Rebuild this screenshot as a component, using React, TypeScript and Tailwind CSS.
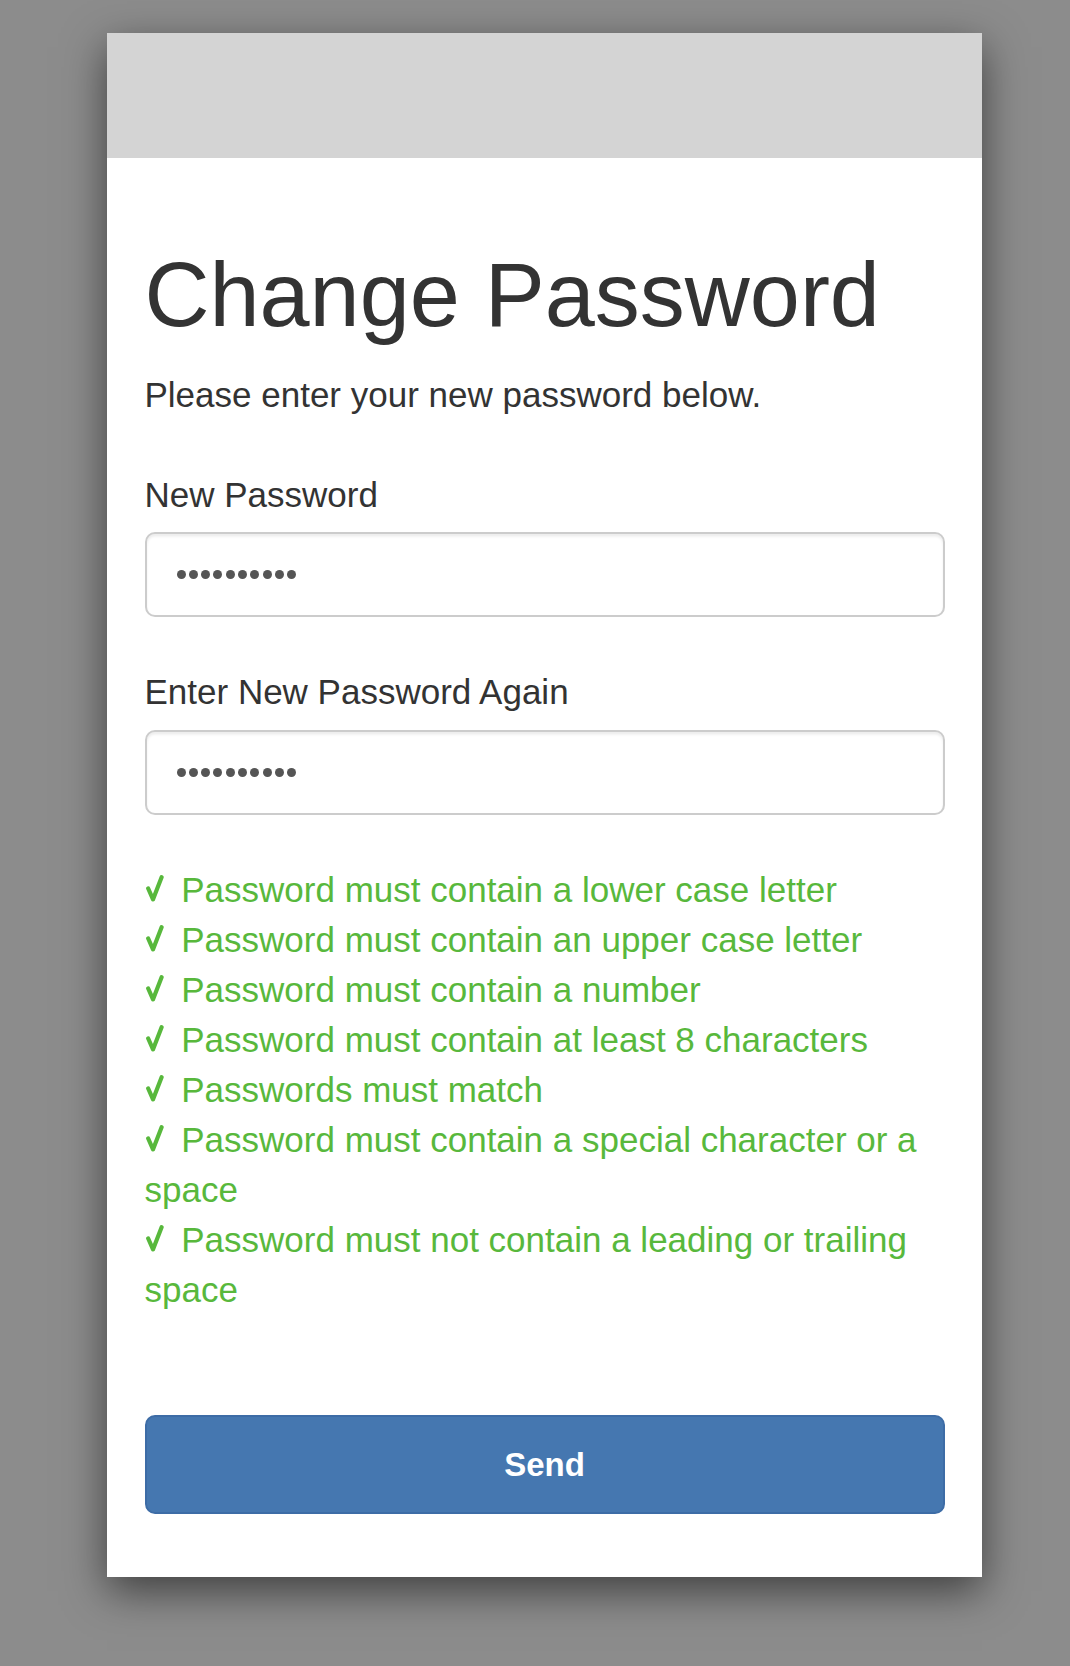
import React from 'react';

const rules = [
  'Password must contain a lower case letter',
  'Password must contain an upper case letter',
  'Password must contain a number',
  'Password must contain at least 8 characters',
  'Passwords must match',
  'Password must contain a special character or a space',
  'Password must not contain a leading or trailing space',
];

function Check() {
  return (
    <span className="inline-block w-[27px] align-baseline">
      <svg width="18" height="27" viewBox="0 0 18 27" className="inline-block align-baseline ml-[1px]" fill="none">
        <path d="M2.2 13.5 L7 24.4 L15.6 2.2" stroke="#58b83c" strokeWidth="4.2" strokeLinecap="round" strokeLinejoin="round" />
      </svg>
    </span>
  );
}

function PasswordField({ label }: { label: string }) {
  return (
    <div>
      <label className="block text-[35px] leading-[50px] mb-[12.5px]">{label}</label>
      <div className="h-[85px] border-[2.5px] border-[#cccccc] rounded-[10px] px-[30px] flex items-center shadow-[inset_0_2.5px_2.5px_rgba(0,0,0,0.075)]">
        <div className="flex gap-[3.3px]">
          {Array.from({ length: 10 }).map((_, i) => (
            <span key={i} className="w-[9px] h-[9px] rounded-full bg-[#555555]" />
          ))}
        </div>
      </div>
    </div>
  );
}

export default function App() {
  return (
    <div
      className="min-h-[1666px] bg-[#8c8c8c] pt-[33px] pb-[89px] text-[#333333]"
      style={{ fontFamily: '"Liberation Sans", Arial, sans-serif' }}
    >
      <div className="ml-[107px] w-[875px] bg-white shadow-[0_14px_40px_rgba(0,0,0,0.55)]">
        {/* Header band */}
        <div className="h-[125px] bg-[#d4d4d4]" />

        <div className="px-[37.5px] pt-[37.5px] pb-[63px]">
          <h1 className="mt-[50px] mb-[25px] text-[90px] leading-[99px] font-normal">Change Password</h1>
          <p className="text-[35px] leading-[50px]">Please enter your new password below.</p>

          <div className="mt-[50px]">
            <PasswordField label="New Password" />
          </div>
          <div className="mt-[50px]">
            <PasswordField label="Enter New Password Again" />
          </div>

          <ul className="mt-[50px] text-[35px] leading-[50px] text-[#58b83c]">
            {rules.map((r) => (
              <li key={r}>
                <Check /> {r}
              </li>
            ))}
          </ul>

          <button className="mt-[100.5px] w-full h-[99px] rounded-[10px] bg-[#4577b0] border-[2.5px] border-[#3d6ca6] text-white font-bold text-[33px]">
            Send
          </button>
        </div>
      </div>
    </div>
  );
}
